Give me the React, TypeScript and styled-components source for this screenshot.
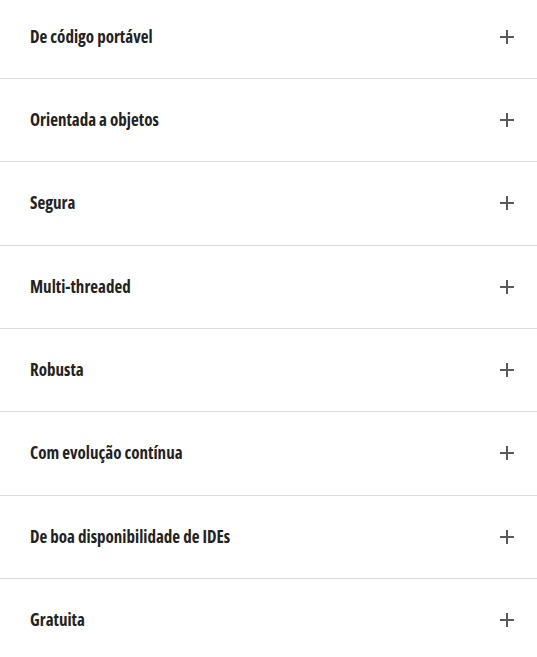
import React from "react";
import styled, { createGlobalStyle } from "styled-components";

const Global = createGlobalStyle`
  html, body { margin: 0; padding: 0; background: #fff; }
  body { font-family: "Open Sans", "Noto Sans", sans-serif; overflow: hidden; }
`;

const List = styled.div`
  display: flex;
  flex-direction: column;
  margin-top: -4.33px;
`;

const Item = styled.div`
  display: flex;
  align-items: center;
  justify-content: space-between;
  height: 82.33px;
  padding: 0 23px 0 30px;
  border-bottom: 1px solid #dcdcdc;
  &:last-child { border-bottom: none; }
`;

const Title = styled.span`
  font-family: "Open Sans", sans-serif;
  font-stretch: 75%;
  font-weight: 700;
  font-size: 17px;
  line-height: 22px;
  color: #222;
`;

const Plus = styled.svg`
  width: 14px;
  height: 14px;
  display: block;
`;

const items = [
  "De código portável",
  "Orientada a objetos",
  "Segura",
  "Multi-threaded",
  "Robusta",
  "Com evolução contínua",
  "De boa disponibilidade de IDEs",
  "Gratuita",
];

export default function App() {
  return (
    <>
      <Global />
      <List>
        {items.map((t) => (
          <Item key={t}>
            <Title>{t}</Title>
            <Plus viewBox="0 0 14 14">
              <path d="M7 0v14M0 7h14" stroke="#5a5a5a" strokeWidth="2" fill="none" />
            </Plus>
          </Item>
        ))}
      </List>
    </>
  );
}
